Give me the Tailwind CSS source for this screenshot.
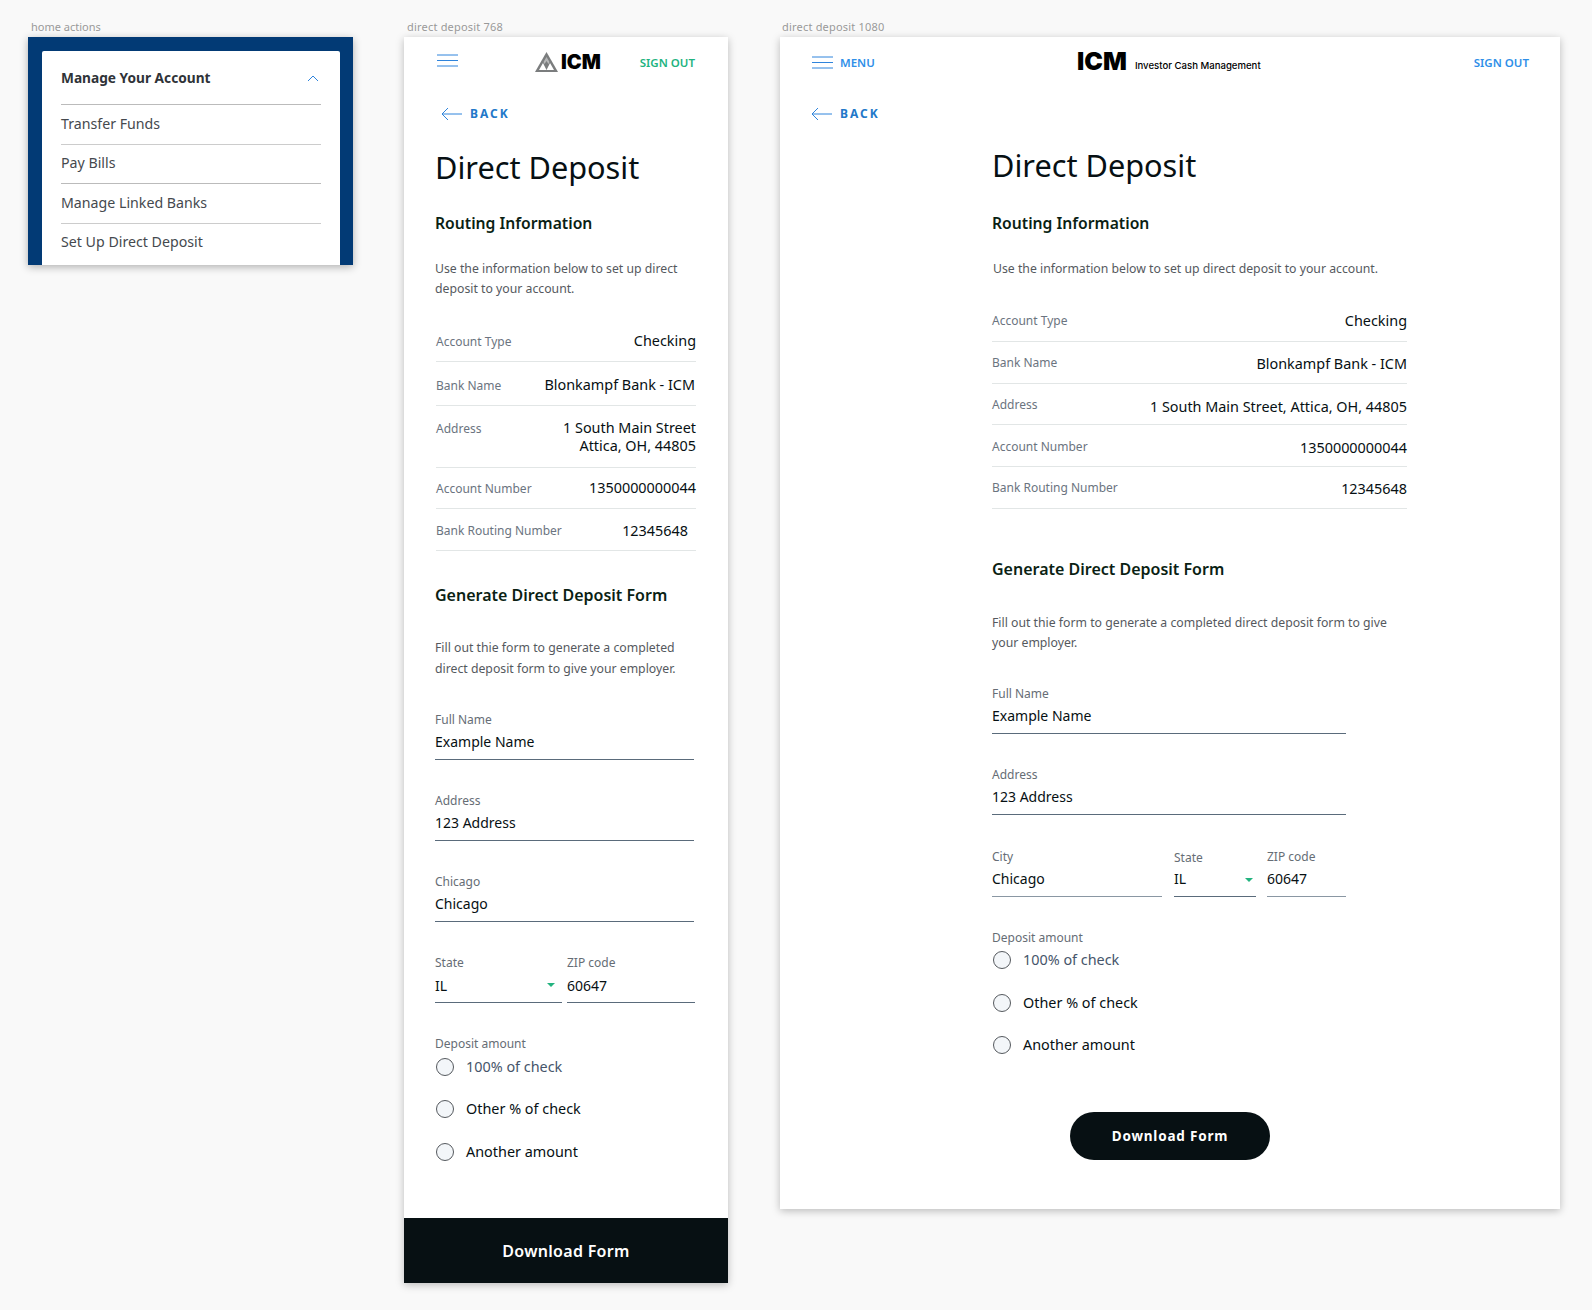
<!DOCTYPE html>
<html lang="en">
<head>
    <meta charset="UTF-8">
    <title>Direct Deposit</title>
    <script src="https://cdn.jsdelivr.net/npm/@tailwindcss/browser@4"></script>
</head>
<body class="bg-[#f9f9f9] h-[1310px] overflow-hidden font-['Noto_Sans',sans-serif] text-[#071013]">
<div class="flex items-start pl-[28px] pt-[20px]">

    <!-- home actions -->
    <section class="w-[325px] mr-[51px]">
        <p class="h-[17px] pl-[3px] text-[11px] leading-[14px] text-[#999]">home actions</p>
        <div class="h-[228px] bg-[#023a75] pt-[14px] pl-[14px] pr-[13px] shadow-[0_2px_8px_rgba(0,0,0,0.3)]">
            <div class="h-[214px] bg-white rounded-t-[2px] px-[19px]">
                <div class="h-[54px] pt-[2px] flex items-center justify-between border-b border-[#bbb]">
                    <h3 class="text-[13.700px] font-bold text-[#2f3338]">Manage Your Account</h3>
                    <svg class="w-[12px] h-[7px] mr-[2px]" viewBox="0 0 12 7" fill="none" stroke="#2f84dc"><path d="M1 6l5-5 5 5"/></svg>
                </div>
                <div class="h-[40px] pb-[2px] flex items-center border-b border-[#ccc] text-[14.200px] text-[#45494e]">Transfer Funds</div>
                <div class="h-[39px] pb-[3px] flex items-center border-b border-[#bbb] text-[14.200px] text-[#45494e]">Pay Bills</div>
                <div class="h-[40px] pb-[2px] flex items-center border-b border-[#ccc] text-[14.200px] text-[#45494e]">Manage Linked Banks</div>
                <div class="h-[39px] pb-[4px] flex items-center text-[14.200px] text-[#45494e]">Set Up Direct Deposit</div>
            </div>
        </div>
    </section>

    <!-- direct deposit 768 -->
    <section class="w-[324px] mr-[52px]">
        <p class="h-[17px] pl-[3px] text-[11px] leading-[14px] tracking-[0.2px] text-[#999]">direct deposit 768</p>
        <div class="h-[1246px] bg-white shadow-[0_2px_8px_rgba(0,0,0,0.25)] flex flex-col">
            <header class="relative h-[50px] flex items-center justify-between pl-[33px] pr-[33px]">
                <svg class="w-[21px] h-[13px] -mt-[3px]" viewBox="0 0 21 13" fill="none" stroke="#2f84dc"><path d="M0 1h21M0 6.500h21M0 12h21"/></svg>
                <div class="absolute left-[131px] top-[14px] flex items-center h-[22px]">
                    <svg class="w-[23px] h-[20px]" viewBox="0 0 23 20"><path d="M11.500 0L23 20H0z" fill="#7b7d7e"/><path d="M4 18l4-7 3.500 7zM11.500 18l3.500-7 4 7z" fill="#fff"/><path d="M8.500 10l3-5 3 5-1 2-2-3-2 3z" fill="#fff" fill-opacity="0.45"/></svg>
                    <span class="ml-[3px] font-['Inter',sans-serif] text-[20px] leading-none font-black text-black">ICM</span>
                </div>
                <a class="mt-[2px] text-[11.500px] font-semibold text-[#22b37f]">SIGN OUT</a>
            </header>
            <a class="mt-[1px] h-[52px] flex items-center pl-[37px]">
                <svg class="w-[21px] h-[14px]" viewBox="0 0 21 14" fill="none" stroke="#2f84dc"><path d="M21 7H1M7 1L1 7l6 6"/></svg>
                <span class="ml-[8px] text-[12px] font-bold tracking-[2px] text-[#2278c9]">BACK</span>
            </a>
            <div class="pl-[31px] pr-[33px] flex-1">
                <h1 class="mt-[2px] h-[50px] leading-[50px] text-[30.700px]">Direct Deposit</h1>
                <h2 class="mt-[19px] h-[24px] leading-[24px] text-[15.700px] font-semibold text-[#0b1f14]">Routing Information</h2>
                <p class="mt-[24px] text-[12.250px] leading-[20px] text-[#55595e]">Use the information below to set up direct deposit to your account.</p>

                <dl class="mt-[19px] ml-[1px] text-[14.400px] w-[260px]">
                    <div class="h-[44px] flex items-center justify-between border-b border-[#e2e6e6]"><dt class="mt-[4px] text-[12px] text-[#6b7480]">Account Type</dt><dd class="mt-[2px]">Checking</dd></div>
                    <div class="h-[44px] flex items-center justify-between border-b border-[#e2e6e6]"><dt class="mt-[4px] text-[12px] text-[#6b7480]">Bank Name</dt><dd class="mt-[2px] mr-[1px]">Blonkampf Bank - ICM</dd></div>
                    <div class="h-[62px] flex items-start justify-between border-b border-[#e2e6e6] pt-[12px]"><dt class="mt-[2px] text-[12px] text-[#6b7480]">Address</dt><dd class="mt-[1px] text-right leading-[18px]">1 South Main Street<br>Attica, OH, 44805</dd></div>
                    <div class="h-[41px] flex items-center justify-between border-b border-[#e2e6e6]"><dt class="mt-[2px] text-[12px] text-[#6b7480]">Account Number</dt><dd>1350000000044</dd></div>
                    <div class="h-[42px] flex items-center justify-between border-b border-[#e2e6e6]"><dt class="mt-[2px] text-[12px] text-[#6b7480]">Bank Routing Number</dt><dd class="mt-[2px] mr-[8px]">12345648</dd></div>
                </dl>

                <h2 class="mt-[32px] h-[24px] leading-[24px] text-[16px] font-semibold text-[#0b1f14]">Generate Direct Deposit Form</h2>
                <p class="mt-[30px] text-[12.250px] leading-[21px] text-[#55595e]">Fill out thie form to generate a completed direct deposit form to give your employer.</p>

                <div class="mt-[32px] w-[259px]">
                    <label class="block h-[18px] leading-[18px] text-[12px] text-[#666d75]">Full Name</label>
                    <div class="h-[31px] pt-[3px] text-[14px] leading-[20px] border-b border-[#5a6b7b]">Example Name</div>
                </div>
                <div class="mt-[32px] w-[259px]">
                    <label class="block h-[18px] leading-[18px] text-[12px] text-[#666d75]">Address</label>
                    <div class="h-[31px] pt-[3px] text-[14px] leading-[20px] border-b border-[#5a6b7b]">123 Address</div>
                </div>
                <div class="mt-[32px] w-[259px]">
                    <label class="block h-[18px] leading-[18px] text-[12px] text-[#666d75]">Chicago</label>
                    <div class="h-[31px] pt-[3px] text-[14px] leading-[20px] border-b border-[#5a6b7b]">Chicago</div>
                </div>
                <div class="mt-[32px] flex w-[260px] gap-[5px]">
                    <div class="w-[127px]">
                        <label class="block h-[18px] leading-[18px] text-[12px] text-[#666d75]">State</label>
                        <div class="relative h-[31px] pt-[4px] text-[14px] leading-[20px] border-b border-[#5a6b7b]">IL
                            <span class="absolute right-[7px] top-[11px] border-x-[4px] border-t-[4px] border-x-transparent border-t-[#22b37f]"></span>
                        </div>
                    </div>
                    <div class="flex-1">
                        <label class="block h-[18px] leading-[18px] text-[12px] text-[#666d75]">ZIP code</label>
                        <div class="h-[31px] pt-[4px] text-[14px] leading-[20px] border-b border-[#5a6b7b]">60647</div>
                    </div>
                </div>

                <p class="mt-[32px] h-[18px] leading-[18px] text-[12px] text-[#666d75]">Deposit amount</p>
                <div class="mt-[2px] h-[24px] flex items-center gap-[12px] text-[14.400px] text-[#46556a]"><span class="ml-[1px] w-[18px] h-[18px] rounded-full border border-[#55595e] bg-[#f3f6f9]"></span>100% of check</div>
                <div class="mt-[18px] h-[24px] flex items-center gap-[12px] text-[14.400px]"><span class="ml-[1px] w-[18px] h-[18px] rounded-full border border-[#55595e] bg-[#f3f6f9]"></span>Other % of check</div>
                <div class="mt-[19px] h-[24px] flex items-center gap-[12px] text-[14.400px]"><span class="ml-[1px] w-[18px] h-[18px] rounded-full border border-[#55595e] bg-[#f3f6f9]"></span>Another amount</div>
            </div>
            <button class="h-[65px] bg-[#071013] text-white text-[16px] font-semibold tracking-[0.3px]">Download Form</button>
        </div>
    </section>

    <!-- direct deposit 1080 -->
    <section class="w-[780px]">
        <p class="h-[17px] pl-[2px] text-[11px] leading-[14px] tracking-[0.2px] text-[#999]">direct deposit 1080</p>
        <div class="h-[1172px] bg-white shadow-[0_2px_8px_rgba(0,0,0,0.25)]">
            <header class="relative h-[50px] flex items-center justify-between pl-[32px] pr-[31px]">
                <div class="flex items-center gap-[7px]">
                    <svg class="w-[21px] h-[13px]" viewBox="0 0 21 13" fill="none" stroke="#2f84dc"><path d="M0 1h21M0 6.500h21M0 12h21"/></svg>
                    <span class="mt-[2px] text-[11.500px] font-semibold text-[#2f8fe8]">MENU</span>
                </div>
                <div class="absolute left-[297px] top-[11px] flex items-end">
                    <span class="font-['Inter',sans-serif] text-[25px] leading-[26px] font-black text-black">ICM</span>
                    <span class="ml-[8px] font-['Inter',sans-serif] text-[9.600px] leading-[16px] font-medium text-black">Investor Cash Management</span>
                </div>
                <a class="mt-[2px] text-[11.500px] font-semibold text-[#2f8fe8]">SIGN OUT</a>
            </header>
            <a class="mt-[1px] h-[52px] flex items-center pl-[31px]">
                <svg class="w-[21px] h-[14px]" viewBox="0 0 21 14" fill="none" stroke="#2f84dc"><path d="M21 7H1M7 1L1 7l6 6"/></svg>
                <span class="ml-[8px] text-[12px] font-bold tracking-[2px] text-[#2278c9]">BACK</span>
            </a>
            <div class="ml-[212px] w-[415px]">
                <h1 class="h-[50px] leading-[50px] text-[30.700px]">Direct Deposit</h1>
                <h2 class="mt-[21px] h-[24px] leading-[24px] text-[15.700px] font-semibold text-[#0b1f14]">Routing Information</h2>
                <p class="mt-[24px] pl-[1px] text-[12.250px] leading-[20px] text-[#55595e]">Use the information below to set up direct deposit to your account.</p>

                <dl class="mt-[20px] text-[14.400px]">
                    <div class="h-[43px] flex items-center justify-between border-b border-[#e2e6e6]"><dt class="mt-[2px] text-[12px] text-[#6b7480]">Account Type</dt><dd class="mt-[2px]">Checking</dd></div>
                    <div class="h-[42px] flex items-center justify-between border-b border-[#e2e6e6]"><dt class="text-[12px] text-[#6b7480]">Bank Name</dt><dd class="mt-[2px]">Blonkampf Bank - ICM</dd></div>
                    <div class="h-[41px] flex items-center justify-between border-b border-[#e2e6e6]"><dt class="mt-[2px] text-[12px] text-[#6b7480]">Address</dt><dd class="mt-[6px]">1 South Main Street, Attica, OH, 44805</dd></div>
                    <div class="h-[42px] flex items-center justify-between border-b border-[#e2e6e6]"><dt class="mt-[2px] text-[12px] text-[#6b7480]">Account Number</dt><dd class="mt-[4px]">1350000000044</dd></div>
                    <div class="h-[42px] flex items-center justify-between border-b border-[#e2e6e6]"><dt class="text-[12px] text-[#6b7480]">Bank Routing Number</dt><dd class="mt-[2px]">12345648</dd></div>
                </dl>

                <h2 class="mt-[48px] h-[24px] leading-[24px] text-[16px] font-semibold text-[#0b1f14]">Generate Direct Deposit Form</h2>
                <p class="mt-[32px] text-[12.250px] leading-[20px] text-[#55595e]">Fill out thie form to generate a completed direct deposit form to give your employer.</p>

                <div class="w-[354px]">
                    <div class="mt-[32px]">
                        <label class="block h-[18px] leading-[18px] text-[12px] text-[#666d75]">Full Name</label>
                        <div class="h-[31px] pt-[3px] text-[14px] leading-[20px] border-b border-[#5a6b7b]">Example Name</div>
                    </div>
                    <div class="mt-[32px]">
                        <label class="block h-[18px] leading-[18px] text-[12px] text-[#666d75]">Address</label>
                        <div class="h-[31px] pt-[3px] text-[14px] leading-[20px] border-b border-[#5a6b7b]">123 Address</div>
                    </div>
                    <div class="mt-[33px] flex">
                        <div class="w-[170px]">
                            <label class="block h-[18px] leading-[18px] text-[12px] text-[#666d75]">City</label>
                            <div class="h-[31px] pt-[3px] text-[14px] leading-[20px] border-b border-[#8a97a3]">Chicago</div>
                        </div>
                        <div class="w-[82px] ml-[12px]">
                            <label class="block h-[18px] leading-[18px] text-[12px] text-[#666d75] translate-y-[1px]">State</label>
                            <div class="relative h-[31px] pt-[3px] text-[14px] leading-[20px] border-b border-[#5a6b7b]">IL
                                <span class="absolute right-[3px] top-[12px] border-x-[4px] border-t-[4px] border-x-transparent border-t-[#22b37f]"></span>
                            </div>
                        </div>
                        <div class="w-[79px] ml-[11px]">
                            <label class="block h-[18px] leading-[18px] text-[12px] text-[#666d75]">ZIP code</label>
                            <div class="h-[31px] pt-[3px] text-[14px] leading-[20px] border-b border-[#8a97a3]">60647</div>
                        </div>
                    </div>

                    <p class="mt-[32px] h-[18px] leading-[18px] text-[12px] text-[#666d75]">Deposit amount</p>
                    <div class="mt-[1px] h-[24px] flex items-center gap-[12px] text-[14.400px] text-[#46556a]"><span class="ml-[1px] w-[18px] h-[18px] rounded-full border border-[#55595e] bg-[#f3f6f9]"></span>100% of check</div>
                    <div class="mt-[19px] h-[24px] flex items-center gap-[12px] text-[14.400px]"><span class="ml-[1px] w-[18px] h-[18px] rounded-full border border-[#55595e] bg-[#f3f6f9]"></span>Other % of check</div>
                    <div class="mt-[18px] h-[24px] flex items-center gap-[12px] text-[14.400px]"><span class="ml-[1px] w-[18px] h-[18px] rounded-full border border-[#55595e] bg-[#f3f6f9]"></span>Another amount</div>

                    <button class="block mt-[55px] mx-auto translate-x-[1px] w-[200px] h-[48px] rounded-full bg-[#071013] text-white text-[13.500px] font-bold tracking-[0.8px]">Download Form</button>
                </div>
            </div>
        </div>
    </section>
</div>
</body>
</html>
